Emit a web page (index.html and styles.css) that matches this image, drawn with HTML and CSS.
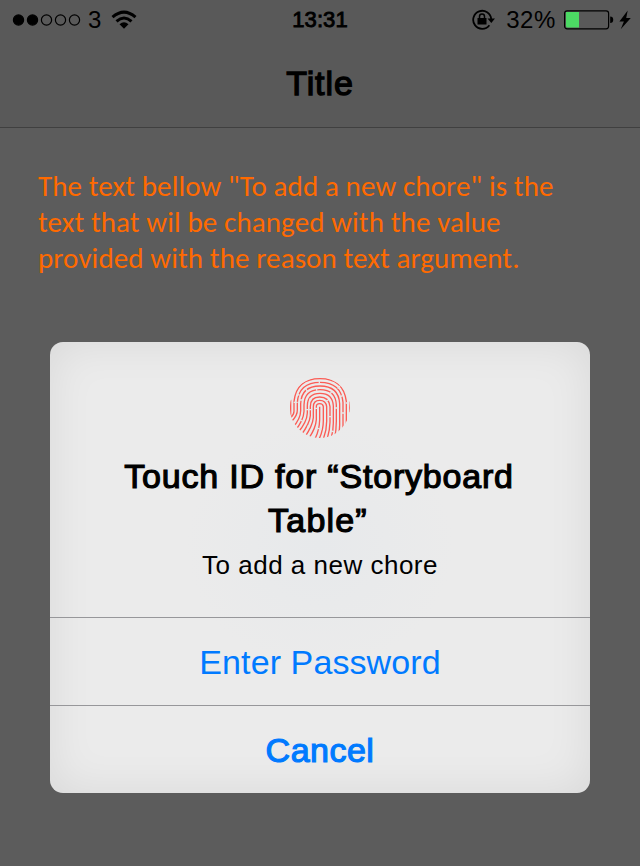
FILE: index.html
```html
<!DOCTYPE html>
<html lang="en">
<head>
<meta charset="utf-8">
<title>Title</title>
<link rel="stylesheet" href="styles.css">
</head>
<body>
<header class="top">
  <div class="status">
    <div class="signal">
      <svg width="70" height="14" viewBox="0 0 70 14"><g fill="none" stroke="#000" stroke-width="1.2"><circle cx="6.5" cy="7" r="5.1" fill="#000"/><circle cx="20.5" cy="7" r="5.1" fill="#000"/><circle cx="34.5" cy="7" r="5.1"/><circle cx="48.5" cy="7" r="5.1"/><circle cx="62.5" cy="7" r="5.1"/></g></svg>
      <span class="carrier">3</span>
      <svg class="wifi" width="26" height="20" viewBox="0 0 26 20"><g fill="none" stroke="#000" stroke-width="3"><path d="M1.5 7.2Q13-3 24.500 7.200M5.500 11.300Q13 4.700 20.500 11.300"/></g><path d="M8.500 14.200Q13 10.500 17.500 14.200L13 18.700Z"/></svg>
    </div>
    <time class="clock">13:31</time>
    <div class="power">
      <svg class="lock" width="25" height="22" viewBox="0 0 25 22"><path d="M18.400 16.200A9 9 0 1 1 20.200 10.200" fill="none" stroke="#000" stroke-width="1.8"/><path d="M16.500 9.500h7.500l-3.700 4.600z"/><path d="M6.500 9h9v6.500h-9z"/><path d="M8.500 9.500V7.500a2.500 2.500 0 0 1 5 0v2" fill="none" stroke="#000" stroke-width="1.500"/></svg>
      <span class="percent">32%</span>
      <svg class="battery" width="50" height="20" viewBox="0 0 50 20"><rect x=".6" y=".8" width="44" height="18" rx="2.500" fill="none" stroke="#000" stroke-width="1.200"/><path d="M2 2h13v15.500H3.500Q2 17.500 2 16z" fill="#4cd964"/><path d="M46.200 6.500q3 0 3 3.300t-3 3.300z"/></svg>
      <svg class="bolt" width="12" height="20" viewBox="0 0 12 20"><path d="M8.700.5.400 11.400h4.500L1.700 19.200 11.800 8H7.200z"/></svg>
    </div>
  </div>
  <h1 class="title">Title</h1>
</header>
<main>
  <p class="note">The text bellow "To add a new chore" is the<br>text that wil be changed with the value<br>provided with the reason text argument.</p>
  <section class="dialog" role="dialog">
    <div class="message">
      <svg class="fingerprint" width="62" height="62" viewBox="27 22 186 186">
        <defs><clipPath id="pad"><ellipse cx="119.500" cy="114" rx="90" ry="91"/></clipPath></defs>
        <g clip-path="url(#pad)" fill="none" stroke="#fb5c55" stroke-width="4">
          <path d="M119 111V150Q118 188 98 220"/>
          <path d="M109 150V111Q109 102 119 102T130 111V153Q130 187 111 220M109 150Q107 177 85 208"/>
          <path d="M100 144V111Q100 92 119 92T140 111V155Q140 190 124 220M100 144Q98 168 74 203"/>
          <path d="M91 138V111Q91 82 119 82T150 111V158Q149 191 137 219M91 138Q89 162 63 197"/>
          <path d="M82 130V109Q82 71 120 71T160 109V160Q160 188 150 215M82 130Q81 157 53 190"/>
          <path d="M72 125V106Q73 60 120 60T169 106V155Q169 185 162 212M72 125Q71 152 45 184"/>
          <path d="M62 123V102Q64 49 120 49T179 102V150Q180 180 174 202M62 123Q62 146 38 174"/>
          <path d="M52 120V98Q57 38 120 38T189 98V180M52 120Q53 137 34 156"/>
          <path d="M42 125V95Q50 27 120 27T199 95V166M42 125Q42 136 31 145"/>
          <path d="M32 139V90M209 128V95"/>
        </g>
        <g fill="none" stroke="#e7e7e7" stroke-width="4"><path d="M118 33v10M77 58l6 7M51 73l8 4M180 49l-7 8M155 66l-5 7M189 77l-8 4M88 87l6 5M41 98h12M58 91h10M78 120h16M105 116h10M145 141h10M164 115h11M185 130h10M114 176l10 3M82 169l8 3M153 184l12 3M137 96l8-5M197 100h8M61 151l8 4M110 53v10"/></g>
      </svg>
      <h2 class="heading"><span class="first">Touch ID for “Storyboard</span><br><span class="second">Table”</span></h2>
      <p class="reason">To add a new chore</p>
    </div>
    <button class="action">Enter Password</button>
    <button class="action cancel">Cancel</button>
  </section>
</main>
</body>
</html>
```
FILE: styles.css
```css
* { box-sizing: border-box; }
body { margin: 0; width: 640px; height: 866px; overflow: hidden; background: #5c5c5c; color: #000; font-family: "Liberation Sans", Arial, sans-serif; }
svg { display: block; flex: none; }
.top { height: 128px; background: #595959; border-bottom: 1px solid #404040; }
.status { height: 40px; display: grid; grid-template-columns: 1fr auto 1fr; align-items: center; padding: 0 9px 0 12px; }
.signal, .power { display: flex; align-items: center; }
.power { justify-content: flex-end; }
.carrier { font-size: 24px; line-height: 28px; margin-left: 6px; }
.wifi { margin-left: 10px; }
.clock { font-size: 22px; line-height: 28px; letter-spacing: .1px; -webkit-text-stroke: .9px #000; margin-left: -3px; }
.percent { font-size: 24px; line-height: 28px; letter-spacing: .6px; margin: 0 8px 0 10px; }
.bolt { margin-left: 5px; }
.title { margin: 23px 0 0; text-align: center; font-size: 34px; line-height: 40px; font-weight: 400; letter-spacing: .9px; -webkit-text-stroke: 1.3px #000; }
.note { margin: 40px 0 0 38px; color: #ff6a00; font: 29px/36px Carlito, "Open Sans", sans-serif; letter-spacing: .12px; white-space: nowrap; }
.dialog { width: 540px; height: 451px; margin: 66px 0 0 50px; border-radius: 13px; overflow: hidden; background: radial-gradient(ellipse at 50% 45%, #e7e9eb 0, #ebebeb 35%); box-shadow: inset 0 0 45px rgba(0,0,0,.08); }
.message { height: 275px; padding-top: 35px; text-align: center; }
.fingerprint { margin: 0 auto; }
.heading { margin: 15px 0 0; font-size: 34px; line-height: 44px; font-weight: 400; -webkit-text-stroke: 1.2px #000; }
.first { letter-spacing: .8px; margin-right: 2px; }
.second { letter-spacing: 1.2px; margin-right: 4px; }
.reason { margin: 7px 0 0; font-size: 26px; line-height: 32px; letter-spacing: .5px; }
.action { display: block; width: 100%; height: 88px; padding: 0; border: 0; border-top: 1px solid #97979a; background: transparent; color: #007aff; font: 34px/40px "Liberation Sans", Arial, sans-serif; letter-spacing: .1px; }
.cancel { letter-spacing: .5px; -webkit-text-stroke: 1.2px #007aff; }
```
